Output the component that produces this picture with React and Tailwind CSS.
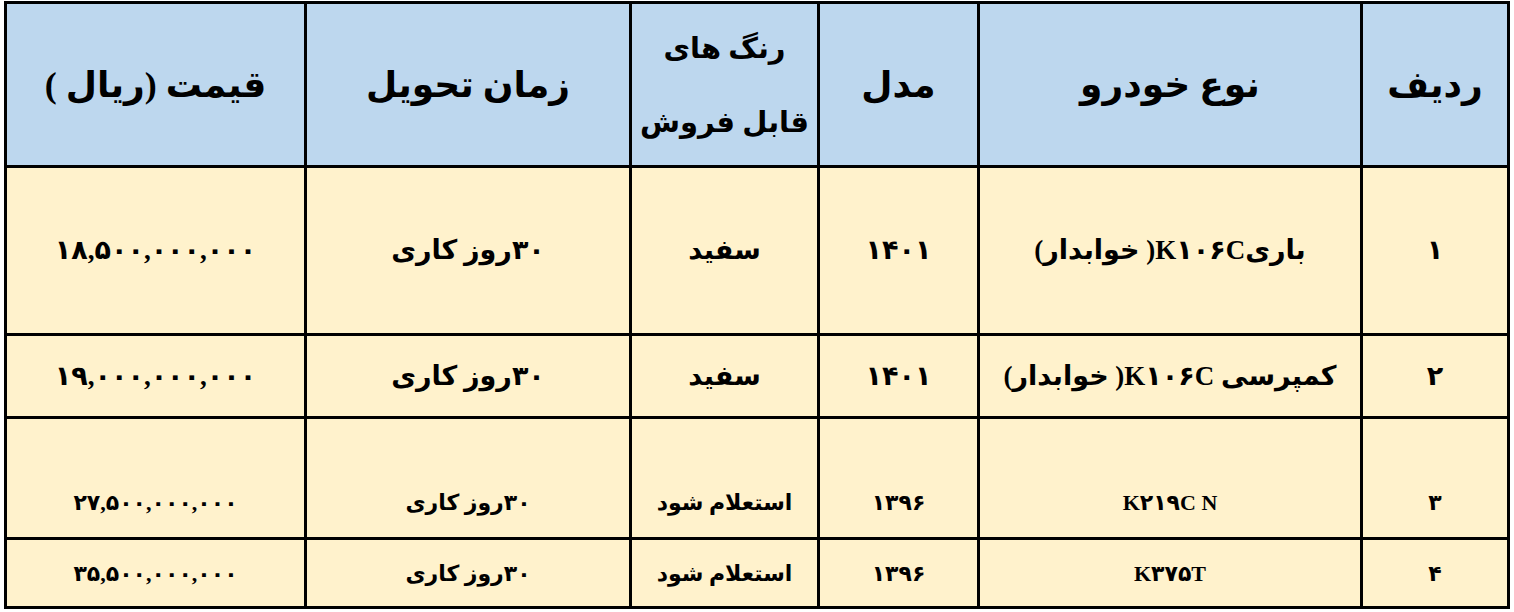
const headers = [
  { label: "ردیف", w: "w-[147px]" },
  { label: "نوع خودرو", w: "w-[383px]" },
  { label: "مدل", w: "w-[160px]" },
  { label: ["رنگ های", "قابل فروش"], w: "w-[188px]" },
  { label: "زمان تحویل", w: "w-[325px]" },
  { label: "قیمت (ریال )", w: "w-[300px]" },
]

const rows = [
  {
    h: "h-[168px]",
    text: "text-[27px]",
    align: "align-middle",
    cells: ["۱", "باریK۱۰۶C( خوابدار)", "۱۴۰۱", "سفید", "۳۰روز کاری", "۱۸,۵۰۰,۰۰۰,۰۰۰"],
  },
  {
    h: "h-[83px]",
    text: "text-[27px]",
    align: "align-middle",
    cells: ["۲", "کمپرسی K۱۰۶C( خوابدار)", "۱۴۰۱", "سفید", "۳۰روز کاری", "۱۹,۰۰۰,۰۰۰,۰۰۰"],
  },
  {
    h: "h-[121px]",
    text: "text-[22px]",
    align: "align-bottom pb-[18px]",
    cells: ["۳", "K۲۱۹C N", "۱۳۹۶", "استعلام شود", "۳۰روز کاری", "۲۷,۵۰۰,۰۰۰,۰۰۰"],
  },
  {
    h: "h-[69px]",
    text: "text-[22px]",
    align: "align-middle",
    cells: ["۴", "K۳۷۵T", "۱۳۹۶", "استعلام شود", "۳۰روز کاری", "۳۵,۵۰۰,۰۰۰,۰۰۰"],
  },
]

export default function App() {
  return (
    <div className="bg-white w-[1514px] h-[612px] pl-[4px] pt-[1px] font-['Liberation_Serif','DejaVu_Sans',serif]">
      <table
        dir="rtl"
        className="table-fixed border-collapse border-[3px] border-black w-[1504px] text-black font-bold"
      >
        <thead>
          <tr className="h-[164px] bg-[#bdd7ee]">
            {headers.map((h, i) => (
              <th
                key={i}
                className={`${h.w} border-[3px] border-black text-center align-middle font-bold whitespace-nowrap ${
                  Array.isArray(h.label) ? "text-[29px] leading-[74px]" : "text-[36px]"
                }`}
              >
                {Array.isArray(h.label) ? (
                  <>
                    <div>{h.label[0]}</div>
                    <div>{h.label[1]}</div>
                  </>
                ) : (
                  h.label
                )}
              </th>
            ))}
          </tr>
        </thead>
        <tbody>
          {rows.map((r, ri) => (
            <tr key={ri} className={`${r.h} bg-[#fff2cc]`}>
              {r.cells.map((c, ci) => (
                <td
                  key={ci}
                  className={`border-[3px] border-black text-center whitespace-nowrap ${r.align} ${r.text}`}
                >
                  {c}
                </td>
              ))}
            </tr>
          ))}
        </tbody>
      </table>
    </div>
  )
}
